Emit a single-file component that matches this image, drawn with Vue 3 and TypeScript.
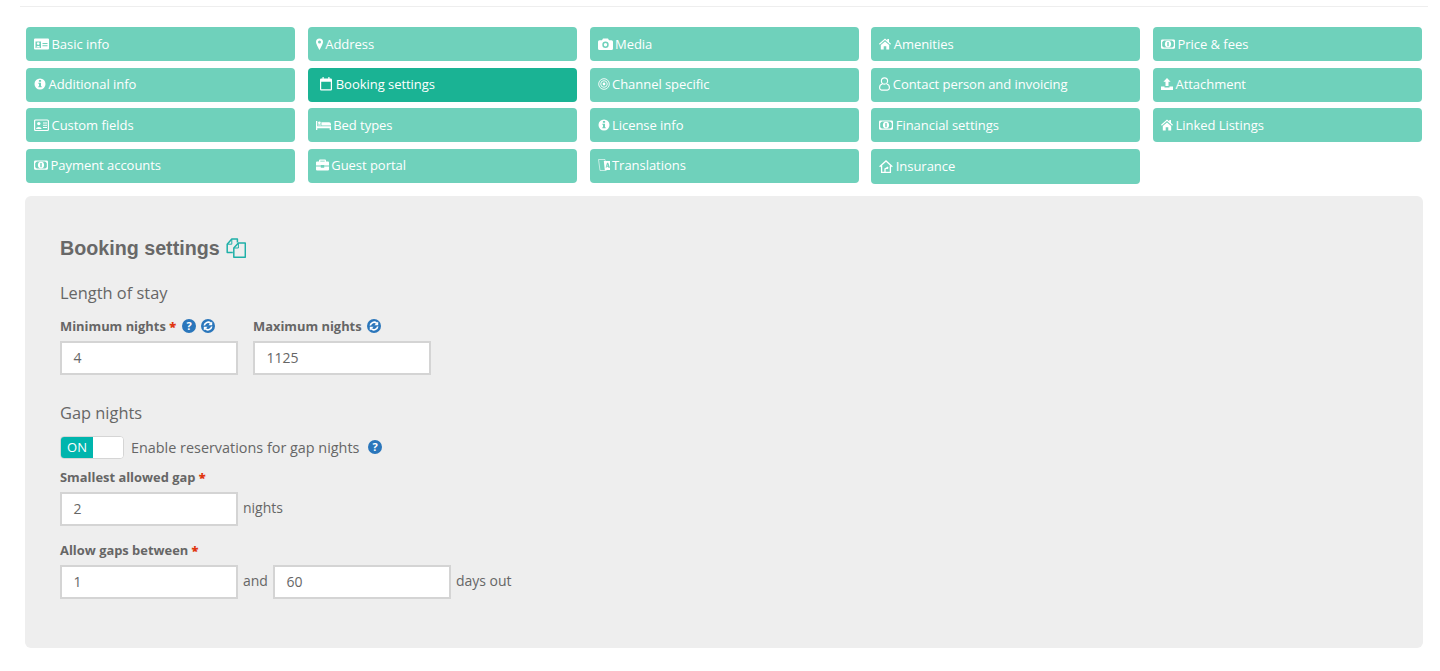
<script setup lang="ts">
interface Tab { label: string; icon: string; w: number; active?: boolean }
const tabs: Tab[] = [
  { label: 'Basic info', icon: 'idcard', w: 15 },
  { label: 'Address', icon: 'pin', w: 7 },
  { label: 'Media', icon: 'camera', w: 15 },
  { label: 'Amenities', icon: 'home', w: 12 },
  { label: 'Price & fees', icon: 'money', w: 14 },
  { label: 'Additional info', icon: 'info', w: 12 },
  { label: 'Booking settings', icon: 'calendar', w: 12, active: true },
  { label: 'Channel specific', icon: 'target', w: 12 },
  { label: 'Contact person and invoicing', icon: 'user', w: 11 },
  { label: 'Attachment', icon: 'upload', w: 12 },
  { label: 'Custom fields', icon: 'card2', w: 15 },
  { label: 'Bed types', icon: 'bed', w: 15 },
  { label: 'License info', icon: 'info', w: 12 },
  { label: 'Financial settings', icon: 'money', w: 14 },
  { label: 'Linked Listings', icon: 'home', w: 12 },
  { label: 'Payment accounts', icon: 'money', w: 14 },
  { label: 'Guest portal', icon: 'case', w: 13 },
  { label: 'Translations', icon: 'lang', w: 12 },
  { label: 'Insurance', icon: 'house', w: 14 },
]
</script>

<template>
  <div class="page">
    <div class="rule"></div>
    <nav class="tabs">
      <a v-for="t in tabs" :key="t.label" class="tab" :class="{ active: t.active, tall: t.label === 'Insurance' }">
        <svg class="ico" :style="{ width: t.w + 'px' }" :viewBox="`0 0 ${t.w} 14`">
          <g v-if="t.icon === 'idcard'">
            <path fill="#fff" fill-rule="evenodd" d="M1 1.500h13a1 1 0 0 1 1 1v9a1 1 0 0 1-1 1H1a1 1 0 0 1-1-1v-9a1 1 0 0 1 1-1zM1.500 4.500v6.500h5.500V4.500zM8.500 6v1H13.500V6zm0 2.200v1H13.500v-1z" />
            <circle cx="4.200" cy="6.600" r="1.300" fill="#fff" /><path fill="#fff" d="M2.200 10.400c.2-2 3.800-2 4 0z" />
          </g>
          <path v-else-if="t.icon === 'pin'" fill="#fff" fill-rule="evenodd" d="M3.500 1.500A3.500 3.500 0 0 1 7 5c0 1.900-2.400 6-3.500 8C2.400 11 0 6.900 0 5a3.500 3.500 0 0 1 3.500-3.500zm0 2a1.500 1.500 0 1 0 0 3 1.500 1.500 0 0 0 0-3z" />
          <path v-else-if="t.icon === 'camera'" fill="#fff" fill-rule="evenodd" d="M5 1.500h5l1 1.800h2.500A1.500 1.500 0 0 1 15 4.800v6.700a1.500 1.500 0 0 1-1.500 1.500h-12A1.500 1.500 0 0 1 0 11.500V4.800a1.500 1.500 0 0 1 1.500-1.500H4zM7.500 4.500a3.200 3.200 0 1 0 0 6.400 3.200 3.200 0 0 0 0-6.400zm0 1.500a1.700 1.700 0 1 1 0 3.400 1.700 1.700 0 0 1 0-3.400z" />
          <path v-else-if="t.icon === 'home'" fill="#fff" d="M6 1.500l2.300 2V2h1.700v3l2 1.800-.8.9L6 3.100.8 7.700 0 6.800zM1.800 8l4.200-3.600L10.200 8v4.500H7.300V9.300H4.700v3.200H1.800z" />
          <g v-else-if="t.icon === 'money'">
            <rect x=".6" y="3" width="12.800" height="8.200" rx=".8" fill="none" stroke="#fff" stroke-width="1.200" />
            <path fill="#fff" d="M1 3h2.200L1 5.200zM13 3h-2.200L13 5.200zM1 11.200h2.200L1 9zM13 11.200h-2.200L13 9z" />
            <ellipse cx="7" cy="7.100" rx="3.100" ry="3.400" fill="#fff" />
            <rect x="6.300" y="5" width="1.400" height="4.200" fill="#6fd1bb" />
          </g>
          <path v-else-if="t.icon === 'info'" fill="#fff" fill-rule="evenodd" d="M6 1.500a5.500 5.500 0 1 1 0 11 5.500 5.500 0 0 1 0-11zM4.900 3v1.700h2.200V3zM4.300 5.700v1h.7v2.600h-.7v1h3.400v-1H7V5.700z" />
          <path v-else-if="t.icon === 'calendar'" fill="#fff" fill-rule="evenodd" d="M2.500 0h1.200v1.500h4.600V0h1.200v1.500h1.300A1.200 1.200 0 0 1 12 2.700v9.600a1.200 1.200 0 0 1-1.200 1.200H1.200A1.200 1.200 0 0 1 0 12.300V2.700a1.200 1.200 0 0 1 1.200-1.200h1.300zM1.200 4.800v7.500h9.600V4.800z" />
          <g v-else-if="t.icon === 'target'" fill="none" stroke="#fff">
            <circle cx="6" cy="7" r="5.300" stroke-width=".9" /><circle cx="6" cy="7" r="3.300" stroke-width=".9" /><circle cx="6" cy="7" r="1.400" fill="#fff" stroke="none" />
          </g>
          <g v-else-if="t.icon === 'user'" fill="none" stroke="#fff" stroke-width="1.100">
            <circle cx="5.500" cy="4" r="3.100" /><path d="M3.400 7c-2 .4-2.800 1.700-2.800 3.600 0 1.600.8 2.500 2 2.500h5.800c1.200 0 2-.9 2-2.500 0-1.900-.8-3.200-2.800-3.600" />
          </g>
          <path v-else-if="t.icon === 'upload'" fill="#fff" d="M6 1l3.600 3.700H7.500v4.400h-3V4.700H2.400zM0 9.500h3.500v.9h5v-.9H12V13H0z" />
          <g v-else-if="t.icon === 'card2'">
            <rect x=".6" y="2" width="13.800" height="10.500" rx="1" fill="none" stroke="#fff" stroke-width="1.200" />
            <circle cx="4.800" cy="5.600" r="1.700" fill="#fff" /><path fill="#fff" d="M2 11c.1-2.800 5.500-2.800 5.600 0z" /><path fill="#fff" d="M9 4.500h4v1H9zm0 2.200h4v1H9zM9 9h4v1H9z" />
          </g>
          <path v-else-if="t.icon === 'bed'" fill="#fff" d="M0 3h1.300v5.300H15V12h-1.300v-1.800H1.300V12H0zM2 4.800a1.400 1.400 0 1 1 2.800 0 1.400 1.400 0 0 1-2.800 0zM5.400 4.300h7.600A2 2 0 0 1 15 6.300v1.200H5.400zM2 6.500h3v1H2z" />
          <path v-else-if="t.icon === 'case'" fill="#fff" fill-rule="evenodd" d="M4 1.500h5a1 1 0 0 1 1 1v1h2a1 1 0 0 1 1 1V7.500H8.200V7H4.800v.5H0V4.500a1 1 0 0 1 1-1h2v-1a1 1 0 0 1 1-1zM4.300 2.800v.7h4.400v-.7zM0 8.500h4.800v1.200h3.400V8.500H13V11.500a1 1 0 0 1-1 1H1a1 1 0 0 1-1-1z" />
          <g v-else-if="t.icon === 'lang'">
            <path fill="none" stroke="#fff" stroke-opacity=".6" stroke-width="1" d="M.5 1.500h6.500l1.200 11H2z" />
            <path fill="#fff" fill-rule="evenodd" d="M5.800 3h6.200v9H6.800zM9 4.800L7.500 9.800h1.100l.3-1h1.200l.3 1H12L10.200 4.800zM9.500 6.200l.4 1.600H9.100z" />
          </g>
          <g v-else-if="t.icon === 'house'" fill="none" stroke="#fff" stroke-width="1.300">
            <path d="M.6 7.800L7 1.900l6.400 5.900M2.600 6.500v6.900h8.800V6.500" /><path d="M6 13.400V10l2.600-1.400M7.800 8l1 .8-.8 1" />
          </g>
        </svg>
        <span>{{ t.label }}</span>
      </a>
    </nav>

    <section class="panel">
      <h2 class="title">
        Booking settings
        <svg class="copy" viewBox="0 0 20 20" fill="none" stroke="#1fb0a8" stroke-width="1.500" stroke-linejoin="round">
          <path d="M6.800 14.600H1.200V6.200L5.800 1h5.600v3.600" />
          <path d="M5.800 1.200v5H1.400" stroke-width="1" />
          <path d="M7.800 10L12.400 5h6.900v14.200H7.800z" />
          <path d="M12.400 5.200v4.800H8" stroke-width="1" />
        </svg>
      </h2>

      <h3 class="sub first">Length of stay</h3>
      <div class="pair">
        <div class="field">
          <div class="label">Minimum nights <b class="req">*</b>
            <svg class="hint h1" viewBox="0 0 14 14"><circle cx="7" cy="7" r="7" fill="#2a76bb" /><text x="7" y="11" text-anchor="middle" class="q">?</text></svg>
            <svg class="hint" viewBox="0 0 14 14"><circle cx="7" cy="7" r="7" fill="#2a76bb" /><path d="M3.300 6.500A3.800 3.800 0 0 1 9.700 4.300M10.700 7.500A3.800 3.800 0 0 1 4.300 9.700" fill="none" stroke="#fff" stroke-width="1.700" /><path d="M11.200 2.400v3.800H7.400zM2.800 11.600V7.800h3.800z" fill="#fff" /></svg>
          </div>
          <div class="box">4</div>
        </div>
        <div class="field">
          <div class="label">Maximum nights<svg class="hint h2" viewBox="0 0 14 14"><circle cx="7" cy="7" r="7" fill="#2a76bb" /><path d="M3.300 6.500A3.800 3.800 0 0 1 9.700 4.300M10.700 7.500A3.800 3.800 0 0 1 4.300 9.700" fill="none" stroke="#fff" stroke-width="1.700" /><path d="M11.200 2.400v3.800H7.400zM2.800 11.600V7.800h3.800z" fill="#fff" /></svg></div>
          <div class="box">1125</div>
        </div>
      </div>

      <h3 class="sub gap">Gap nights</h3>
      <div class="switch-row">
        <div class="switch"><span class="on">ON</span><span class="off"></span></div>
        <span class="switch-text">Enable reservations for gap nights</span>
        <svg class="hint big" viewBox="0 0 14 14"><circle cx="7" cy="7" r="7" fill="#2a76bb" /><text x="7" y="11" text-anchor="middle" class="q">?</text></svg>
      </div>

      <div class="label l2">Smallest allowed gap <b class="req">*</b></div>
      <div class="inline"><div class="box">2</div><span class="unit">nights</span></div>

      <div class="label l3">Allow gaps between <b class="req">*</b></div>
      <div class="inline">
        <div class="box">1</div><span class="unit">and</span><div class="box">60</div><span class="unit">days out</span>
      </div>
    </section>
  </div>
</template>

<style scoped>
.page {
  width: 1440px;
  height: 671px;
  overflow: hidden;
  background: #fff;
  font-family: "Open Sans", sans-serif;
  color: #666;
  padding: 6px 0 0 0;
  box-sizing: border-box;
}
.rule { height: 1px; background: #eeeeee; margin: 0 12px 0 20px; }
.tabs {
  display: grid;
  grid-template-columns: repeat(5, 269px);
  column-gap: 12.75px;
  grid-auto-rows: 34.2px;
  row-gap: 6.4px;
  margin: 20px 0 0 26px;
}
.tab {
  display: flex;
  align-items: center;
  gap: 2.5px;
  padding: 0 0 1px 8px;
  box-sizing: border-box;
  background: #6fd1bb;
  color: #fff;
  font-size: 13px;
  letter-spacing: -0.04px;
  border-radius: 4px;
  white-space: nowrap;
}
.tab.active { background: #1ab394; padding-left: 12px; gap: 4px; }
.tab.tall { height: 35px; }
.ico { height: 14px; flex: none; }
.panel {
  margin: 13px 0 0 25px;
  width: 1398px;
  height: 452px;
  box-sizing: border-box;
  background: #eeeeee;
  border-radius: 6px;
  padding: 40px 0 0 35px;
}
.title {
  margin: 0;
  height: 24px;
  display: flex;
  align-items: center;
  gap: 6px;
  font: bold 19.7px/24px "Liberation Sans", sans-serif;
  color: #686868;
}
.copy { width: 20px; height: 20px; }
.sub { margin: 0; font-size: 16.4px; font-weight: 500; line-height: 22px; color: #666; }
.sub.first { margin-top: 22px; }
.sub.gap { margin-top: 27px; }
.pair { display: flex; gap: 15px; margin-top: 13px; }
.label {
  display: flex;
  align-items: center;
  font-size: 12.9px;
  font-weight: 700;
  line-height: 18px;
  color: #666;
  white-space: pre;
}
.req { color: #e0360f; }
.hint { width: 14px; height: 14px; margin-left: 5px; }
.hint.h1 { margin-left: 6px; }
.hint.h2 { margin-left: 5px; }
.q { fill: #fff; font: bold 11px "Open Sans", sans-serif; }
.box {
  width: 178px;
  height: 34px;
  box-sizing: border-box;
  border: 2px solid #d4d4d4;
  background: #fff;
  padding-left: 11.5px;
  font-size: 14px;
  line-height: 30px;
  color: #666;
}
.field .box { margin-top: 6px; }
.switch-row { display: flex; align-items: center; margin-top: 12px; height: 23px; }
.switch {
  display: flex;
  width: 64px;
  height: 23px;
  box-sizing: border-box;
  border: 1px solid #d5d5d5;
  border-radius: 4px;
  overflow: hidden;
  background: #fff;
}
.on { width: 32px; background: #00b5ad; color: #fff; font-size: 13px; line-height: 21px; text-align: center; }
.off { flex: 1; background: #fff; }
.switch-text { margin-left: 7px; font-size: 14.4px; font-weight: 500; }
.hint.big { margin-left: 9px; }
.l2 { margin-top: 9px; }
.l3 { margin-top: 15px; }
.inline { display: flex; margin-top: 6px; align-items: flex-start; }
.unit { font-size: 14px; line-height: 32px; margin: 0 5px; }
</style>
